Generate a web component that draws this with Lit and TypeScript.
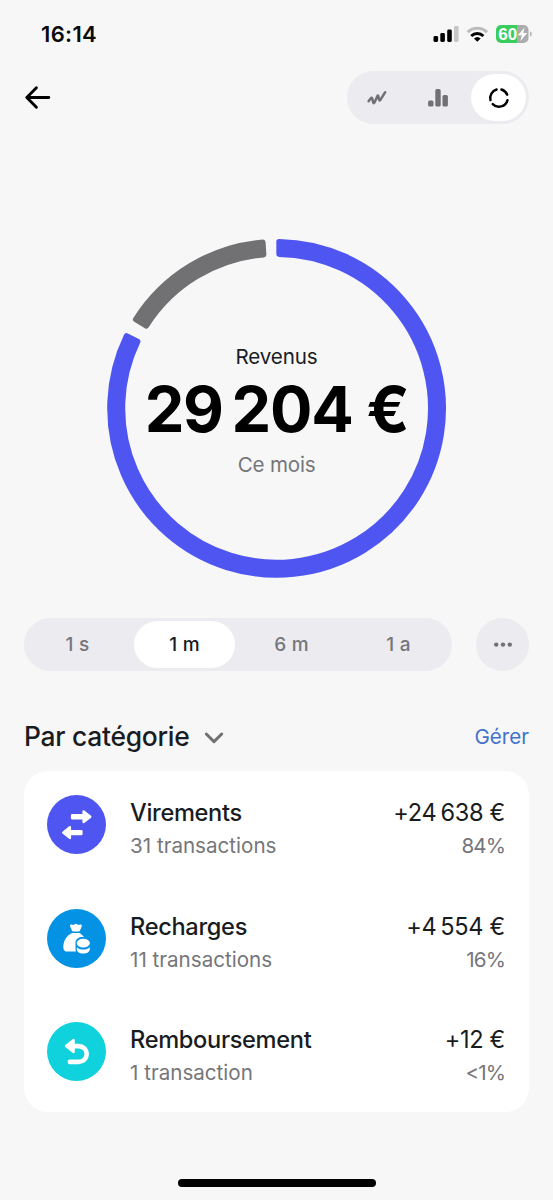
import { LitElement, html, svg, css } from "lit";
import { customElement, property, state } from "lit/decorators.js";

type IconName = "transfer" | "topup" | "refund";

interface Category {
  icon: IconName;
  color: string;
  name: string;
  detail: string;
  amount: string;
  share: string;
}

const CATEGORIES: Category[] = [
  { icon: "transfer", color: "#4f55f1", name: "Virements", detail: "31 transactions", amount: "+24\u2009638\u00a0€", share: "84%" },
  { icon: "topup", color: "#0492e4", name: "Recharges", detail: "11 transactions", amount: "+4\u2009554\u00a0€", share: "16%" },
  { icon: "refund", color: "#0fd2dd", name: "Remboursement", detail: "1 transaction", amount: "+12\u00a0€", share: "<1%" },
];

const ICONS = {
  transfer: svg`
    <g fill="#fff" stroke="#fff" stroke-width="2.4" stroke-linejoin="round">
      <path d="M25.1 20.3H36.6V16.5L43.3 21.8L36.6 27.1V23.2H25.1Z"/>
      <path d="M34.4 36.1H22.9V32.3L16.2 37.6L22.9 42.9V39H34.4Z"/>
    </g>`,
  topup: svg`
    <path fill="#fff" d="M23.1 17.3C22.7 16.1 23.5 15.3 24.6 15.6L26.3 16.1L27.6 15.2Q28.9 14.4 30.2 15.2L31.5 16.1L33.3 15.6C34.4 15.3 35.2 16.1 34.8 17.3L33 21.5Q32.6 22.4 31.6 22.4H26.3Q25.3 22.4 24.9 21.5Z"/>
    <path fill="#fff" d="M25.3 23.9H32.4C34.2 24.7 35.7 26.1 36.9 28C32.4 27.6 28.5 29.7 28.5 33.4V38.5C28.5 40.3 28.6 41.6 29 42.6H20.3C17.8 42.6 16.3 41 16.3 38.4C16.3 31.8 19.6 26.2 25.3 23.9Z"/>
    <ellipse fill="#fff" cx="36.3" cy="34.1" rx="6.6" ry="4.3"/>
    <path fill="#fff" d="M29.8 38.2C31.3 39.8 33.6 40.6 36.3 40.6S41.3 39.8 42.8 38.2V40.2C42.8 42.8 39.8 44.6 36.3 44.6S29.8 42.8 29.8 40.2Z"/>`,
  refund: svg`
    <path fill="#fff" stroke="#fff" stroke-width="2.4" stroke-linejoin="round" d="M19 24L26.6 18V30Z"/>
    <path fill="none" stroke="#fff" stroke-width="4.6" stroke-linecap="round" d="M26 24.1H31.8A7.9 7.9 0 0 1 31.8 39.9H22.9"/>`,
};

@customElement("status-bar")
class StatusBar extends LitElement {
  static styles = css`
    :host { display: flex; justify-content: space-between; align-items: center; height: 68px; padding: 0 21px 0 41px; box-sizing: border-box; }
    .time { font-size: 22px; font-weight: 600; line-height: 28px; color: #0b0b0b; letter-spacing: 0.35px; }
    .glyphs { display: block; }
    .level { font-family: "Liberation Sans", sans-serif; font-size: 17px; font-weight: 700; }
  `;
  render() {
    return html`
      <span class="time">16:14</span>
      <svg class="glyphs" width="102" height="28" viewBox="430 20 102 28">
        <rect x="433.5" y="36" width="4.6" height="6" rx="1.4"/>
        <rect x="440.3" y="33" width="4.6" height="9" rx="1.4"/>
        <rect x="447.2" y="29.5" width="4.6" height="12.5" rx="1.4"/>
        <rect x="454" y="26" width="4.6" height="16" rx="1.4" fill="#c6c6c8"/>
        <path d="M467.6 32.2A14 14 0 0 1 487 32.2" fill="none" stroke="#bdbdbf" stroke-width="3"/>
        <path d="M471.2 36A9 9 0 0 1 483.4 36" fill="none" stroke="#000" stroke-width="3"/>
        <path d="M477.3 41.8L473.9 38.6A5 5 0 0 1 480.7 38.6Z"/>
        <path d="M501 25H517V43H501A5 5 0 0 1 496 38V30A5 5 0 0 1 501 25Z" fill="#38cd5c"/>
        <path d="M517 25H523.5A5 5 0 0 1 528.5 30V38A5 5 0 0 1 523.5 43H517Z" fill="#acacae"/>
        <path d="M530 31.3Q531.8 32 531.8 34T530 36.7Z" fill="#b4b4b6"/>
        <text class="level" x="498.2" y="40.1" fill="#fff">60</text>
        <path d="M524.6 27.4L517.9 35.3H521.8L520.4 41L527.2 32.9H523.3Z" fill="#fff"/>
      </svg>`;
  }
}

@customElement("donut-chart")
class DonutChart extends LitElement {
  static styles = css`
    :host { display: grid; width: 340px; height: 340px; }
    .ring, .caption { grid-area: 1 / 1; }
    .ring { display: block; }
    .caption { display: flex; flex-direction: column; align-items: center; padding-top: 105px; }
    .label { font-size: 20.6px; line-height: 28px; color: #191c1f; letter-spacing: -0.1px; }
    .total { font-size: 63px; line-height: 76px; font-weight: 700; color: #000; letter-spacing: -1.2px; white-space: nowrap; }
    .period { font-size: 20.6px; line-height: 28px; color: #75767a; padding-top: 4px; letter-spacing: -0.2px; }
  `;

  private sector(from: number, to: number, color: string) {
    const corner = 2.8;
    const outer = 169.4 - corner;
    const inner = 151.4 + corner;
    const point = (r: number, deg: number, side: number) => {
      const a = (deg * Math.PI) / 180 + (side * corner) / r;
      return `${(170 + r * Math.sin(a)).toFixed(2)} ${(170 - r * Math.cos(a)).toFixed(2)}`;
    };
    const large = to - from > 180 ? 1 : 0;
    const d = `M${point(outer, from, 1)}A${outer} ${outer} 0 ${large} 1 ${point(outer, to, -1)}L${point(inner, to, -1)}A${inner} ${inner} 0 ${large} 0 ${point(inner, from, 1)}Z`;
    return svg`<path d=${d} fill=${color} stroke=${color} stroke-width=${corner * 2} stroke-linejoin="round"/>`;
  }

  render() {
    return html`
      <svg class="ring" width="340" height="340" viewBox="0.4 -0.3 340 340">
        ${this.sector(-0.1, 296.7, "#4f55f1")}
        ${this.sector(301.3, 356.2, "#717173")}
      </svg>
      <div class="caption">
        <span class="label">Revenus</span>
        <span class="total">29\u2009204\u00a0€</span>
        <span class="period">Ce mois</span>
      </div>`;
  }
}

@customElement("category-row")
class CategoryRow extends LitElement {
  @property({ attribute: false }) item!: Category;
  static styles = css`
    :host { display: flex; align-items: flex-start; height: 113.7px; padding: 24px 24px 0 23px; box-sizing: border-box; }
    .icon { display: block; flex: none; margin-right: 24px; }
    .names, .values { display: flex; flex-direction: column; white-space: nowrap; padding-top: 1px; }
    .names { flex: 1; }
    .values { align-items: flex-end; }
    .main { font-size: 23.6px; line-height: 34px; color: #191c1f; letter-spacing: -0.32px; }
    .name { font-weight: 450; }
    .sub { font-size: 20.6px; line-height: 32px; color: #75767a; }
    .share { letter-spacing: -0.9px; }
  `;
  render() {
    const c = this.item;
    return html`
      <svg class="icon" width="59" height="59" viewBox="0 0 59 59">
        <circle cx="29.5" cy="29.5" r="29.5" fill=${c.color}/>
        ${ICONS[c.icon]}
      </svg>
      <div class="names"><span class="main name">${c.name}</span><span class="sub">${c.detail}</span></div>
      <div class="values"><span class="main">${c.amount}</span><span class="sub share">${c.share}</span></div>`;
  }
}

@customElement("app-root")
class AppRoot extends LitElement {
  @state() private range = "1 m";

  static styles = css`
    :host { display: flex; flex-direction: column; width: 553px; height: 1200px; overflow: hidden; box-sizing: border-box; background: #f7f7f7; font-family: Inter, "Liberation Sans", sans-serif; }
    button { font: inherit; border: 0; padding: 0; background: none; }
    svg { display: block; }
    .toolbar { display: flex; justify-content: space-between; align-items: center; height: 53px; margin-top: 3px; padding: 0 24px; }
    .back { margin-bottom: 2px; }
    .views { display: flex; width: 182px; height: 53px; border-radius: 27px; background: #ebebf0; padding: 3px 0; box-sizing: border-box; }
    .view { flex: 1; display: flex; align-items: center; justify-content: center; margin: 0 2.6px; border-radius: 24px; }
    .on { background: #fff; }
    .chart { align-self: center; margin-top: 114px; }
    .periods { display: flex; gap: 24px; height: 53px; margin: 40px 24px 0; }
    .ranges { display: flex; flex: 1; border-radius: 27px; background: #ebebf0; padding: 3px 0; }
    .range { flex: 1; margin: 0 3px; border-radius: 24px; font-size: 19px; font-weight: 450; color: #75767a; letter-spacing: 0.2px; }
    .range.on { color: #191c1f; font-weight: 500; }
    .more { display: flex; align-items: center; justify-content: center; width: 53px; border-radius: 50%; background: #ebebf0; }
    .heading { display: flex; align-items: center; height: 40px; margin: 45px 24px 0; }
    .group { font-size: 26.4px; font-weight: 500; color: #191c1f; letter-spacing: -0.25px; }
    .chevron { margin: 3px 0 0 15px; }
    .manage { margin-left: auto; font-size: 20.6px; color: #4372cb; }
    .card { margin: 15px 24px 0; height: 340.5px; border-radius: 24px; background: #fff; }
    .home { width: 198px; height: 8px; border-radius: 4px; background: #000; align-self: center; margin-top: auto; margin-bottom: 13px; }
  `;

  render() {
    return html`
      <status-bar></status-bar>
      <div class="toolbar">
        <svg class="back" width="28" height="28" viewBox="0 0 28 28" fill="none" stroke="#000" stroke-width="2.9" stroke-linecap="round" stroke-linejoin="round">
          <path d="M2.8 14.5H24.8M12.4 4.8L2.8 14.5L12.4 24.2"/>
        </svg>
        <div class="views">
          <button class="view">
            <svg width="30" height="30" viewBox="0 0 30 30" fill="none" stroke="#717173" stroke-width="2.5" stroke-linecap="round" stroke-linejoin="round">
              <path d="M6.6 18.2L8.8 15.2Q9.8 14 10.2 15.5L11.2 19.4Q11.7 20.9 12.5 19.4L15.3 13.2Q16 11.8 16.4 13.4L17.1 16.8Q17.5 18.3 18.4 16.9L23.2 9.2"/>
            </svg>
          </button>
          <button class="view">
            <svg width="30" height="30" viewBox="0 0 30 30" fill="#717173">
              <rect x="5.1" y="17.4" width="5.4" height="6.2" rx="1.6"/>
              <rect x="12.3" y="6.1" width="5.4" height="17.5" rx="1.6"/>
              <rect x="19.5" y="12" width="5.4" height="11.6" rx="1.6"/>
            </svg>
          </button>
          <button class="view on">
            <svg width="30" height="30" viewBox="0 0 30 30" fill="none" stroke="#000" stroke-width="2.4" stroke-linecap="round">
              <path d="M17.4 6.5A8.8 8.8 0 0 1 23.2 11.7"/>
              <path d="M23.5 17.1A8.8 8.8 0 0 1 8.7 21.1"/>
              <path d="M6.5 17.1A8.8 8.8 0 0 1 12.6 6.5"/>
            </svg>
          </button>
        </div>
      </div>
      <donut-chart class="chart"></donut-chart>
      <div class="periods">
        <div class="ranges">
          ${["1 s", "1 m", "6 m", "1 a"].map(
            (r) => html`<button class="range ${r === this.range ? "on" : ""}" @click=${() => (this.range = r)}>${r}</button>`
          )}
        </div>
        <button class="more">
          <svg width="20" height="8" viewBox="0 0 20 8" fill="#717173">
            <circle cx="3.2" cy="3.6" r="2.2"/><circle cx="10" cy="3.6" r="2.2"/><circle cx="16.8" cy="3.6" r="2.2"/>
          </svg>
        </button>
      </div>
      <div class="heading">
        <span class="group">Par catégorie</span>
        <svg class="chevron" width="20" height="14" viewBox="0 0 20 14" fill="none" stroke="#717173" stroke-width="3" stroke-linecap="round" stroke-linejoin="round">
          <path d="M2.3 3L10 10.6L17.7 3"/>
        </svg>
        <span class="manage">Gérer</span>
      </div>
      <div class="card">${CATEGORIES.map((c) => html`<category-row .item=${c}></category-row>`)}</div>
      <div class="home"></div>`;
  }
}
